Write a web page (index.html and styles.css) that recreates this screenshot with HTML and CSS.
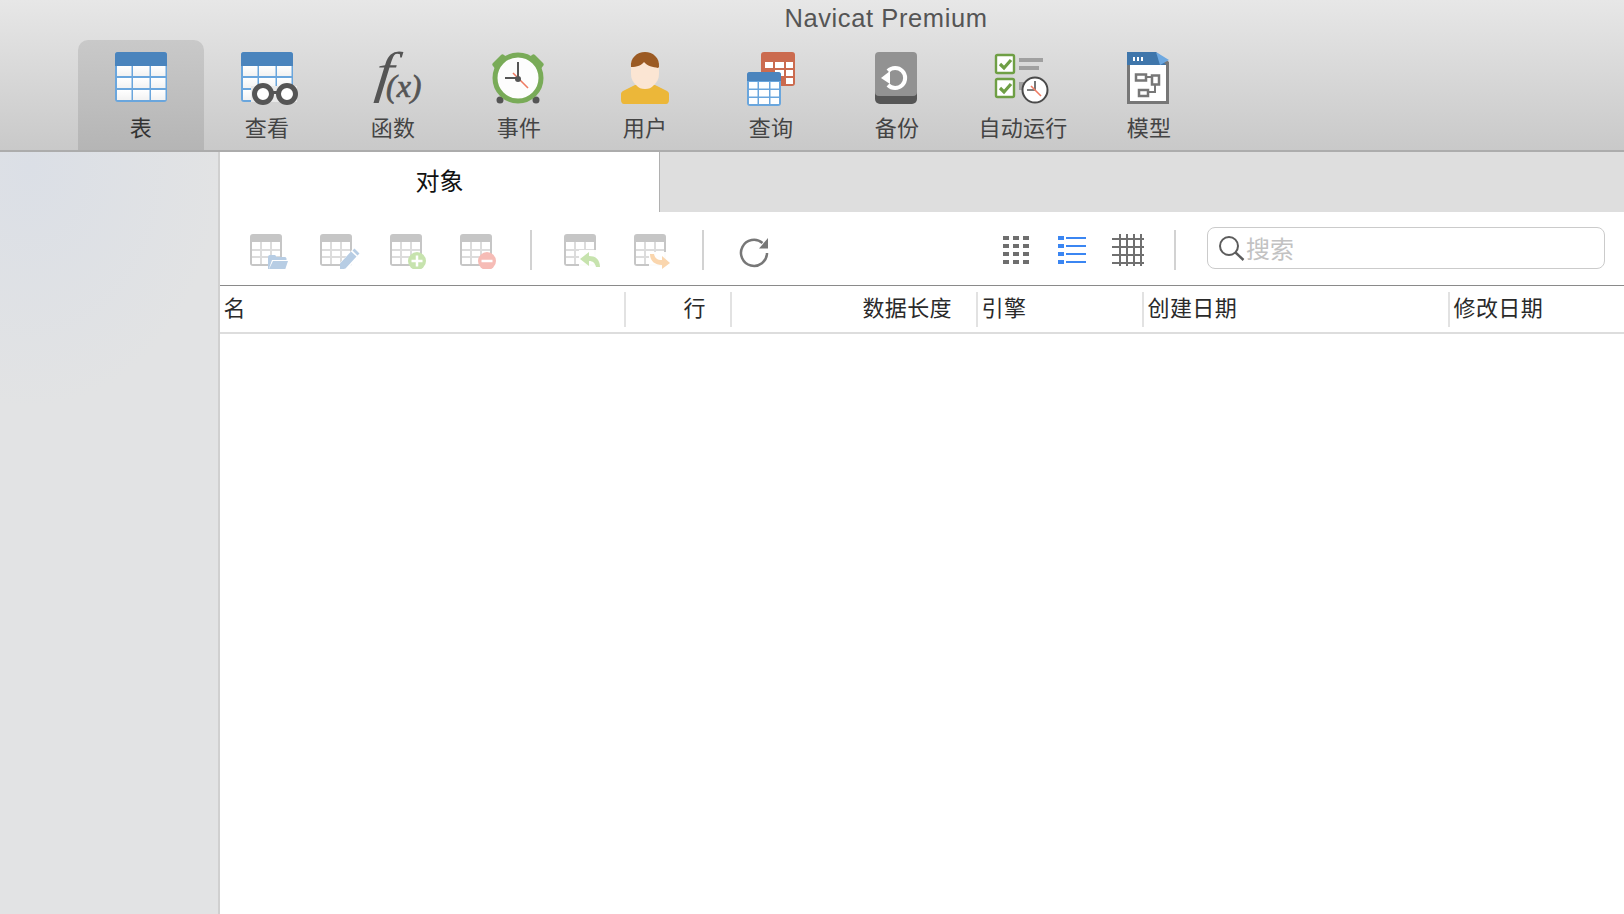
FILE: index.html
```html
<!DOCTYPE html>
<html lang="zh">
<head>
<meta charset="utf-8">
<title>Navicat Premium</title>
<link rel="stylesheet" href="styles.css">
</head>
<body>
<svg class="defs" width="0" height="0" aria-hidden="true">
  <defs>
    <linearGradient id="cellfill" x1="0" y1="0" x2="0" y2="1"><stop offset="0" stop-color="#ffffff"/><stop offset="1" stop-color="#f2f2f2"/></linearGradient>
    <symbol id="bigtable" viewBox="0 0 52 50">
      <rect width="52" height="50" rx="3" fill="#6aa6dd"/>
      <path d="M0 14V3a3 3 0 0 1 3-3h46a3 3 0 0 1 3 3v11z" fill="#4a84bd"/>
      <g fill="url(#cellfill)">
        <rect x="2" y="14" width="14.5" height="10"/><rect x="18" y="14" width="16.5" height="10"/><rect x="36" y="14" width="14.5" height="10"/>
        <rect x="2" y="26" width="14.5" height="10"/><rect x="18" y="26" width="16.5" height="10"/><rect x="36" y="26" width="14.5" height="10"/>
        <rect x="2" y="38" width="14.5" height="10"/><rect x="18" y="38" width="16.5" height="10"/><rect x="36" y="38" width="14.5" height="10"/>
      </g>
    </symbol>
    <symbol id="midtable" viewBox="0 0 34 34">
      <rect width="34" height="34" rx="3" fill="#6aa6dd"/>
      <path d="M0 9V3a3 3 0 0 1 3-3h28a3 3 0 0 1 3 3v6z" fill="#4a84bd"/>
      <g fill="#fff">
        <rect x="2" y="10" width="8.5" height="6.5"/><rect x="12" y="10" width="10" height="6.5"/><rect x="23.5" y="10" width="8.5" height="6.5"/>
        <rect x="2" y="18" width="8.5" height="6.5"/><rect x="12" y="18" width="10" height="6.5"/><rect x="23.5" y="18" width="8.5" height="6.5"/>
        <rect x="2" y="26" width="8.5" height="6"/><rect x="12" y="26" width="10" height="6"/><rect x="23.5" y="26" width="8.5" height="6"/>
      </g>
    </symbol>
    <symbol id="smalltable" viewBox="0 0 32 32">
      <rect width="32" height="32" rx="3" fill="#c6c6c6"/>
      <rect x="2" y="8" width="28" height="22" fill="#fff"/>
      <path d="M2 16h28M2 23h28M11 8v22M21 8v22" stroke="#dcdcdc" stroke-width="2" fill="none"/>
    </symbol>
    <symbol id="tinyclock" viewBox="0 0 28 28">
      <circle cx="14" cy="14" r="12.5" fill="#fff" stroke="#4a4a4a" stroke-width="2"/>
      <path d="M14 5v9H6" stroke="#555" stroke-width="1.6" fill="none"/>
      <path d="M10 10l10 10" stroke="#ef7c63" stroke-width="1.6"/>
    </symbol>
  </defs>
</svg>
<div class="window">
  <header class="titlebar">
    <h1 class="title">Navicat Premium</h1>
    <nav class="tools">
      <div class="tool tool-active">
        <svg class="tool-icon" viewBox="106 50 70 56"><use href="#bigtable" x="115" y="52" width="52" height="50"/></svg>
        <span class="tool-label">表</span>
      </div>
      <div class="tool">
        <svg class="tool-icon" viewBox="232 50 70 56">
          <use href="#bigtable" x="241" y="52" width="52" height="50"/>
          <path d="M251 86h46v16h-46z" fill="#e9e9e9"/>
          <circle cx="263" cy="94" r="8.500" fill="#fff" stroke="#555" stroke-width="5"/>
          <circle cx="287" cy="94" r="8.500" fill="#fff" stroke="#555" stroke-width="5"/>
          <path d="M270 92.500h10" stroke="#555" stroke-width="3"/>
        </svg>
        <span class="tool-label">查看</span>
      </div>
      <div class="tool">
        <svg class="tool-icon" viewBox="358 50 70 56">
          <text class="fx-f" transform="translate(374 91) skewX(-6) scale(1.15 1)">f</text>
          <text class="fx-x" x="386" y="97">(x)</text>
        </svg>
        <span class="tool-label">函数</span>
      </div>
      <div class="tool">
        <svg class="tool-icon" viewBox="484 50 70 56">
          <path d="M493 63l8-8c1-1 2-1 3 0l4 3-12 12-3-4c-1-1-1-2 0-3zM543 63l-8-8c-1-1-2-1-3 0l-4 3 12 12 3-4c1-1 1-2 0-3z" fill="#79ab58"/>
          <circle cx="500" cy="100" r="3.500" fill="#555"/><circle cx="536" cy="100" r="3.500" fill="#555"/>
          <circle cx="518" cy="78" r="23" fill="#fdfdfd" stroke="#79ab58" stroke-width="5"/>
          <path d="M518 62v16h-13" stroke="#555" stroke-width="2" fill="none"/>
          <path d="M513 73l15 15" stroke="#ef7c63" stroke-width="1.600"/>
          <circle cx="518" cy="79" r="3" fill="#555"/>
        </svg>
        <span class="tool-label">事件</span>
      </div>
      <div class="tool">
        <svg class="tool-icon" viewBox="610 50 70 56">
          <path d="M621 94c0-1 .5-2 2-3l12-6h20l12 6c1.500 1 2 2 2 3v6c0 2-1 4-3 4h-42c-2 0-3-2-3-4z" fill="#ecb739"/>
          <path d="M631 62h28v12c0 5-2 8-5 11-3 3-5 4-9 4s-6-1-9-4c-3-3-5-6-5-11z" fill="#fbe5d3"/>
          <path d="M631 67c-1-9 6-15 14-15s15 6 14 15l-1 1c-5-1-11-2-14-6-2 3-7 5-13 5z" fill="#9b5a23"/>
        </svg>
        <span class="tool-label">用户</span>
      </div>
      <div class="tool">
        <svg class="tool-icon" viewBox="736 50 70 56">
          <g>
            <rect x="761" y="52" width="34" height="34" rx="3" fill="#cb6b4f"/>
            <path d="M765 62h8v6h-8zM775 62h9v6h-9zM786 62h7v6h-7zM775 70h9v6h-9zM786 70h7v6h-7zM786 78h7v6h-7z" fill="#fff"/>
          </g>
          <use href="#midtable" x="747" y="72" width="34" height="34"/>
        </svg>
        <span class="tool-label">查询</span>
      </div>
      <div class="tool">
        <svg class="tool-icon" viewBox="862 50 70 56">
          <rect x="875" y="70" width="42" height="34" rx="5" fill="#565656"/>
          <rect x="875" y="52" width="42" height="44" rx="4" fill="#929292"/>
          <path d="M888 71a10 10 0 1 1 0 14" stroke="#fff" stroke-width="4" fill="none"/>
          <path d="M881 78l9-7v13z" fill="#fff"/>
        </svg>
        <span class="tool-label">备份</span>
      </div>
      <div class="tool">
        <svg class="tool-icon" viewBox="988 50 70 56">
          <rect x="996" y="55" width="18" height="18" rx="1.500" fill="#fff" stroke="#6f9f45" stroke-width="2.400"/>
          <rect x="996" y="79" width="18" height="18" rx="1.500" fill="#fff" stroke="#6f9f45" stroke-width="2.400"/>
          <path d="M1000 64l4 4 7-8M1000 88l4 4 7-8" stroke="#6f9f45" stroke-width="3.200" fill="none"/>
          <path d="M1019 58h24v4h-24zM1019 66h20v4h-20zM1019 82h6v8h-6z" fill="#a0a0a0"/>
          <use href="#tinyclock" x="1021" y="76" width="28" height="28"/>
        </svg>
        <span class="tool-label">自动运行</span>
      </div>
      <div class="tool">
        <svg class="tool-icon" viewBox="1114 50 70 56">
          <path d="M1127 52h29l13 10v42h-42z" fill="#777"/>
          <path d="M1130 65h36v36h-36z" fill="#fff"/>
          <path d="M1127 52h29l10 13h-39z" fill="#3f76ab"/>
          <path d="M1156 52l13 8-9 5z" fill="#6da8e0"/>
          <path d="M1133 57h2v4h-2zM1137 57h2v4h-2zM1141 57h2v4h-2z" fill="#fff"/>
          <path d="M1136 74.500h10v6h-10zM1152 75.500h7v9h-7zM1139 90h9v6h-9z" fill="#fff" stroke="#777" stroke-width="2.500"/>
          <path d="M1146 77h6M1155 85v7h-7" fill="none" stroke="#777" stroke-width="2"/>
        </svg>
        <span class="tool-label">模型</span>
      </div>
    </nav>
  </header>
  <div class="content">
    <aside class="sidebar"></aside>
    <main class="main">
      <div class="tabs">
        <div class="tab">对象</div>
        <div class="tab-rest"></div>
      </div>
      <div class="actions">
        <svg class="action" viewBox="0 -7 40 42">
          <use href="#smalltable" width="32" height="32"/>
          <path d="M18 23c0-1 1-2 2-2h5l2 2h9c1 0 2 1 2 2v9c0 1-1 2-2 2H18z" fill="#fff"/>
          <path d="M18 25v-2c0-1 .5-2 2-2h5l2 2h8c1 0 1.500 1 1.500 2v1H22l-3.500 10H18zM23 27h15l-3 9H18.500z" fill="#b7cde4"/>
        </svg>
        <svg class="action" viewBox="0 -7 40 42">
          <use href="#smalltable" width="32" height="32"/>
          <path d="M20 36v-7l12-13 7 6-12 14z" fill="#fff"/>
          <path d="M20 29.500l11-12 5.500 5-11 12-5.500 1.500zM32.500 16.500l2-2 5 5-2 2z" fill="#b7cde4"/>
        </svg>
        <svg class="action" viewBox="0 -7 40 42">
          <use href="#smalltable" width="32" height="32"/>
          <circle cx="27" cy="27" r="9" fill="#c7e3ae"/>
          <path d="M21.500 27h11M27 21.500v11" stroke="#fff" stroke-width="2.500"/>
        </svg>
        <svg class="action" viewBox="0 -7 40 42">
          <use href="#smalltable" width="32" height="32"/>
          <circle cx="27" cy="27" r="9" fill="#f6bcb6"/>
          <path d="M21.500 27h11" stroke="#fff" stroke-width="2.500"/>
        </svg>
        <span class="divider"></span>
        <svg class="action" viewBox="0 -7 40 42">
          <use href="#smalltable" width="32" height="32"/>
          <path d="M15 16h22v19H15z" fill="#fff" opacity=".95"/>
          <path d="M16 25l9-7v4c6 0 11 3 11 11h-4c-1-4-3-6-7-6v5z" fill="#c7e3ae"/>
        </svg>
        <svg class="action" viewBox="0 -7 40 42">
          <use href="#smalltable" width="32" height="32"/>
          <path d="M15 18h22v17H15z" fill="#fff" opacity=".95"/>
          <path d="M16 20h4c1 4 3 6 8 6v-4l8 7-8 6v-4c-7 0-12-4-12-11z" fill="#fad6ae"/>
        </svg>
        <span class="divider divider-second"></span>
        <svg class="refresh" viewBox="738 227 32 42">
          <path d="M762.500 243a13 13 0 1 0 4.500 10" stroke="#777" stroke-width="2.500" fill="none"/>
          <path d="M759 248.500l9-10.500v10.500z" fill="#777"/>
        </svg>
        <span class="spacer"></span>
        <svg class="view view-dots" viewBox="1003 227 26 42">
          <path d="M1003 236h6v4h-6zM1013 236h6v4h-6zM1023 236h6v4h-6zM1003 244h6v4h-6zM1013 244h6v4h-6zM1023 244h6v4h-6zM1003 252h6v4h-6zM1013 252h6v4h-6zM1023 252h6v4h-6zM1003 260h6v4h-6zM1013 260h6v4h-6zM1023 260h6v4h-6z" fill="#6e6e6e"/>
        </svg>
        <svg class="view view-list" viewBox="1058 227 28 42">
          <path d="M1058 236h6v4h-6zM1058 244h6v4h-6zM1058 252h6v4h-6zM1058 260h6v4h-6zM1066 237h20v2h-20zM1066 245h20v2h-20zM1066 253h20v2h-20zM1066 261h20v2h-20z" fill="#3b86f2"/>
        </svg>
        <svg class="view view-grid" viewBox="1112 227 32 42">
          <path d="M1112 239h32M1112 247h32M1112 255h32M1112 263h32M1120 234v32M1127 234v32M1134 234v32M1141 234v32" stroke="#707070" stroke-width="2" fill="none"/>
        </svg>
        <span class="divider divider-third"></span>
        <div class="search">
          <svg class="search-icon" viewBox="0 0 28 28">
            <circle cx="11" cy="11" r="9" fill="none" stroke="#5c5c5c" stroke-width="2"/>
            <path d="M17.500 17.500l8 7.500" stroke="#5c5c5c" stroke-width="2.400"/>
          </svg>
          <span class="search-text">搜索</span>
        </div>
      </div>
      <div class="columns">
        <div class="col">名</div>
        <div class="col col-right">行</div>
        <div class="col col-right">数据长度</div>
        <div class="col">引擎</div>
        <div class="col">创建日期</div>
        <div class="col col-last">修改日期</div>
      </div>
    </main>
  </div>
</div>
</body>
</html>
```
FILE: styles.css
```css
* { box-sizing: border-box; }
html, body { margin: 0; padding: 0; height: 100%; overflow: hidden; background: #fff; }
body { font-family: "Noto Sans CJK SC", "Liberation Sans", sans-serif; }
.defs { display: block; width: 0; height: 0; overflow: hidden; }
.window { display: flex; flex-direction: column; height: 914px; width: 1624px; }

.titlebar { height: 152px; flex: none; background: linear-gradient(#e7e7e7, #c9c9c9); border-bottom: 2px solid #acacac; display: flex; flex-direction: column; }
.title { margin: 0; height: 40px; flex: none; text-align: center; padding: 0 0 4px 148px; font: 400 25.5px/36px "Liberation Sans", sans-serif; letter-spacing: 0.6px; color: #555; }
.tools { display: flex; padding-left: 78px; height: 110px; flex: none; }
.tool { width: 126px; display: flex; flex-direction: column; align-items: center; padding-top: 10px; border-radius: 10px 10px 0 0; }
.tool-active { background: linear-gradient(#c9c9c9, #b5b5b5); }
.tool-icon { width: 70px; height: 56px; display: block; flex: none; overflow: visible; }
.tool-label { margin-top: 3.5px; font-size: 22px; line-height: 32px; letter-spacing: 0.3px; color: #444; }
.tool-active .tool-label { color: #333; }
.fx-f { font: italic 400 56px "Liberation Serif", serif; fill: #555; }
.fx-x { font: italic 400 32px "Liberation Serif", serif; fill: #555; stroke: #555; stroke-width: 0.7px; }

.content { flex: 1; display: flex; min-height: 0; }
.sidebar { width: 220px; flex: none; background: radial-gradient(ellipse 190px 240px at 30px 15px, #dbdfe6, rgba(226, 227, 228, 0)), #e2e3e4; border-right: 2px solid #d0d0d0; }
.main { flex: 1; min-width: 0; background: #fff; display: flex; flex-direction: column; }

.tabs { display: flex; height: 60px; flex: none; background: #dedede; }
.tab { width: 440px; background: #fff; border-right: 1px solid #b0b0b0; text-align: center; font-size: 24px; line-height: 55px; color: #111; }
.tab-rest { flex: 1; }

.actions { height: 74px; flex: none; display: flex; align-items: center; padding: 0 19px 2px 30px; border-bottom: 1px solid #8a8a8a; gap: 30px; }
.action { width: 40px; height: 42px; display: block; flex: none; }
.divider { width: 2px; height: 40px; margin: 4px 2px 0 0; background: #d2d2d2; flex: none; }
.divider-second { margin: 4px 4px 0 -2px; }
.refresh { width: 32px; height: 42px; flex: none; display: block; }
.spacer { flex: 1; }
.view { height: 42px; display: block; flex: none; }
.view-dots { width: 26px; }
.view-list { width: 28px; margin-left: -1px; margin-right: -4px; }
.view-grid { width: 32px; }
.divider-third { margin: 4px 1px 0 0; }
.search { width: 398px; height: 42px; flex: none; display: flex; align-items: center; border: 1.5px solid #cbcbcb; border-radius: 8px; padding-left: 10px; background: #fff; }
.search-icon { width: 28px; height: 28px; flex: none; display: block; margin-top: 2px; }
.search-text { font-size: 24px; line-height: 38px; color: #c2c2c2; }

.columns { height: 48px; flex: none; display: grid; grid-template-columns: 406px 106px 246px 166px 306px 1fr; padding: 6px 0 5px; border-bottom: 2px solid #dddddd; }
.col { font-size: 22px; line-height: 28px; letter-spacing: 0.4px; color: #2a2a2a; padding: 0 3.5px; border-right: 2px solid #e2e2e2; white-space: nowrap; }
.col-right { text-align: right; padding-right: 24px; }
.col-last { border-right: 0; }
```
